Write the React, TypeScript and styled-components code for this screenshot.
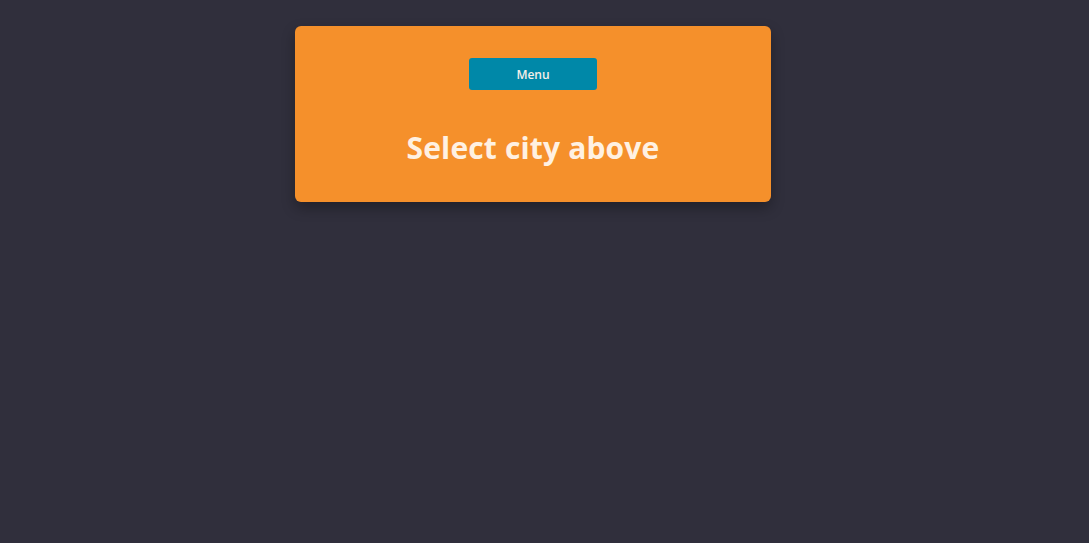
import React from "react";
import styled, { createGlobalStyle } from "styled-components";

const Global = createGlobalStyle`
  html, body {
    margin: 0;
    padding: 0;
    background: #302f3c;
    height: 100%;
  }
  #root { min-height: 100%; }
`;

const Page = styled.div`
  min-height: 543px;
  background: #302f3c;
  padding: 26px 0 0 295px;
  box-sizing: border-box;
  font-family: "Open Sans", "Noto Sans", sans-serif;
`;

const Card = styled.section`
  width: 476px;
  height: 176px;
  box-sizing: border-box;
  background: #f5902b;
  border-radius: 6px;
  box-shadow: 0 6px 14px rgba(0, 0, 0, 0.3);
  display: flex;
  flex-direction: column;
  align-items: center;
  padding-top: 32px;
`;

const MenuButton = styled.button`
  width: 128px;
  height: 32px;
  border: none;
  border-radius: 3px;
  background: #0088a8;
  color: #f6efe8;
  font-family: "Open Sans", "Noto Sans", sans-serif;
  font-size: 12px;
  font-weight: 600;
  cursor: pointer;
  padding: 0;
`;

const Heading = styled.h1`
  margin: 38px 0 0;
  color: #fff1e2;
  font-family: "Open Sans", "Noto Sans", sans-serif;
  font-size: 30px;
  font-weight: 700;
  line-height: 40px;
  letter-spacing: 0.15px;
`;

export default function App() {
  return (
    <>
      <Global />
      <Page>
        <Card>
          <MenuButton>Menu</MenuButton>
          <Heading>Select city above</Heading>
        </Card>
      </Page>
    </>
  );
}
